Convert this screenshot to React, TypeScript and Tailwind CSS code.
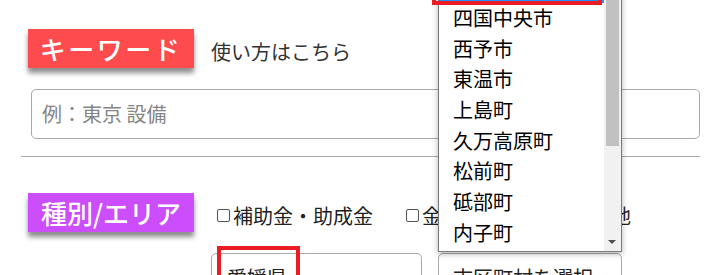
import React from "react";

const items = ["大洲市", "伊予市", "四国中央市", "西予市", "東温市", "上島町", "久万高原町", "松前町", "砥部町", "内子町"];

export default function App() {
  return (
    <div
      className="relative w-[719px] h-[275px] overflow-hidden bg-white text-[#222]"
      style={{ fontFamily: '"Noto Sans CJK JP", "Noto Sans", sans-serif' }}
    >
      <div className="ml-[21px] w-[679px] pt-[29px]">
        {/* keyword row */}
        <div className="flex items-center">
          <div className="ml-[7px] flex h-[39px] w-[166px] items-center justify-center bg-[#fe4b4e] text-[26px] font-medium leading-none tracking-[2.5px] text-white shadow-[0_5px_5px_rgba(0,0,0,0.45)]">
            キーワード
          </div>
          <span className="ml-[17px] pt-[7px] text-[20px] leading-none text-[#333]">使い方はこちら</span>
        </div>
        <div className="ml-[10px] mt-[21px] flex h-[50px] w-[669px] items-center rounded-[5px] border border-[#aaa] px-[10px] text-[20px] text-[#858585]">
          例：東京 設備
        </div>
        <div className="mt-[17px] h-px w-full bg-[#a8a8a8]" />

        {/* category row */}
        <div className="mt-[36px] flex items-center">
          <div className="ml-[7px] flex h-[39px] w-[166px] items-center justify-center bg-[#cc4dfb] text-[26px] font-medium leading-none text-white shadow-[0_5px_5px_rgba(0,0,0,0.45)]">
            種別/エリア
          </div>
          <label className="ml-[23px] flex items-center pt-[6px] text-[20px] leading-none">
            <span className="h-[13px] w-[13px] rounded-[2px] border border-[#555]" />
            <span className="ml-[3px]">補助金・助成金</span>
          </label>
          <label className="ml-[33px] flex items-center pt-[6px] text-[20px] leading-none">
            <span className="h-[13px] w-[13px] rounded-[2px] border border-[#555]" />
            <span className="ml-[3px] whitespace-nowrap tracking-[1px]">金融・税制・企業立地</span>
          </label>
        </div>

        {/* selects */}
        <div className="mt-[21px] ml-[190px] flex gap-[16px]">
          <div className="flex h-[50px] w-[211px] items-center rounded-[5px] border border-[#aaa] px-[15px] text-[20px]">
            愛媛県
          </div>
          <div className="flex h-[50px] w-[184px] items-center rounded-[5px] border border-[#aaa] px-[14px] text-[20px]">
            市区町村を選択
          </div>
        </div>
      </div>

      {/* open dropdown */}
      <div className="absolute left-[438px] top-[-90px] h-[342px] w-[184px] border border-[#7a7a7a] bg-white shadow-[0_2px_6px_rgba(0,0,0,0.3)]">
        <div className="flex h-full flex-col justify-end pb-[3px] pr-[17px]">
          {items.map((t) => (
            <div
              key={t}
              className={
                "flex h-[30.7px] shrink-0 items-center pl-[14px] text-[20px] leading-none text-black " +
                (t === "伊予市" ? "bg-[#1e90ff] text-white" : "")
              }
            >
              {t}
            </div>
          ))}
        </div>
        <div className="absolute bottom-0 right-0 top-0 w-[17px] bg-[#f1f1f1]">
          <div className="absolute left-[2px] top-0 h-[235px] w-[13px] bg-[#c1c1c1]" />
          <div className="absolute bottom-[7px] left-[4px] h-0 w-0 border-l-[4px] border-r-[4px] border-t-[4px] border-l-transparent border-r-transparent border-t-[#505050]" />
        </div>
      </div>

      {/* red annotation boxes */}
      <div className="absolute left-[432px] top-[-30px] h-[35px] w-[170px] border-4 border-[#ec1c24]" />
      <div className="absolute left-[217px] top-[246px] h-[60px] w-[83px] border-4 border-[#ec1c24]" />
    </div>
  );
}
